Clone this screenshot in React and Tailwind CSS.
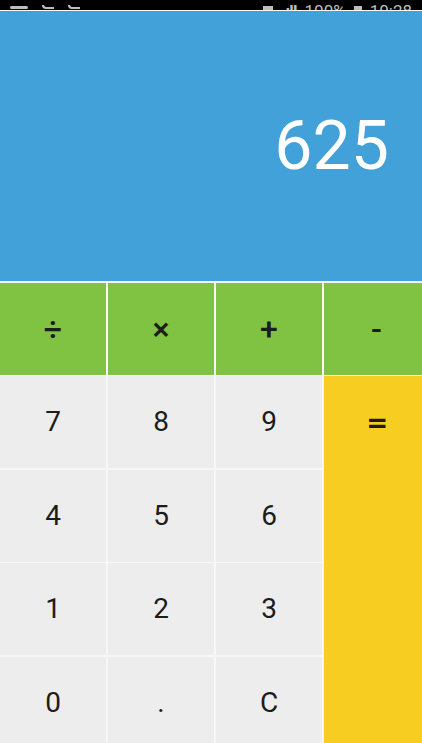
const keys = [
  ['7', '8', '9'],
  ['4', '5', '6'],
  ['1', '2', '3'],
  ['0', '.', 'C'],
];

function Key({ label, className }) {
  return (
    <button className={`flex items-center justify-center text-[#1c1c1c] ${className}`}>
      {label}
    </button>
  );
}

export default function App() {
  return (
    <div
      className="w-[422px] h-[743px] overflow-hidden flex flex-col bg-[#f7f7f7]"
      style={{ fontFamily: 'Roboto, "Noto Sans", sans-serif' }}
    >
      {/* status bar, top of it is cropped off */}
      <div className="h-[10px] shrink-0 bg-black overflow-hidden flex items-end justify-between px-[10px] text-[#9a9a9a]">
        <div className="flex items-end gap-[14px] pb-[1px]">
          <div className="w-[18px] h-[3px] bg-[#bdbdbd] rounded-sm" />
          <div className="w-[12px] h-[4px] border-b-2 border-l-2 border-[#bdbdbd] rounded-bl-md" />
          <div className="w-[12px] h-[4px] border-b-2 border-l-2 border-[#bdbdbd] rounded-bl-md" />
        </div>
        <div className="flex items-end gap-[8px] text-[17px] leading-none text-[#bdbdbd] translate-y-[10px]">
          <span className="text-[9px]">⇅</span>
          <div className="w-[10px] h-[14px] bg-[#bdbdbd]" />
          <span className="tracking-tighter font-bold">.ıll</span>
          <span>100%</span>
          <div className="w-[8px] h-[14px] bg-[#bdbdbd]" />
          <span>10:28</span>
        </div>
      </div>

      {/* display */}
      <div className="h-[270px] shrink-0 mt-[1px] bg-[#43a1d9] flex items-center justify-end pr-[33px]">
        <span className="text-[68px] text-white leading-none font-normal">625</span>
      </div>

      {/* keypad */}
      <div className="mt-[1.5px] shrink-0 grid grid-cols-[106px_106px_106px_1fr] grid-rows-[92px_92px_92px_92px_92px] gap-x-[2px] gap-y-[1.5px]">
        <Key label="÷" className="bg-[#80c241] text-[32px] font-medium" />
        <Key label="×" className="bg-[#80c241] text-[32px] font-medium" />
        <Key label="+" className="bg-[#80c241] text-[32px] font-medium" />
        <Key label="-" className="bg-[#80c241] text-[32px] font-medium pl-[7px]" />
        {keys.map((row) =>
          row.map((k) => <Key key={k} label={k} className="bg-[#ededed] text-[28px]" />)
        )}
        <div className="col-start-4 row-start-2 row-span-4 bg-[#f8cd21] flex flex-col">
          <div className="h-[92px] pl-[7px] flex items-center justify-center text-[30px] font-bold text-[#1c1c1c] scale-x-125">
            =
          </div>
        </div>
      </div>
    </div>
  );
}
